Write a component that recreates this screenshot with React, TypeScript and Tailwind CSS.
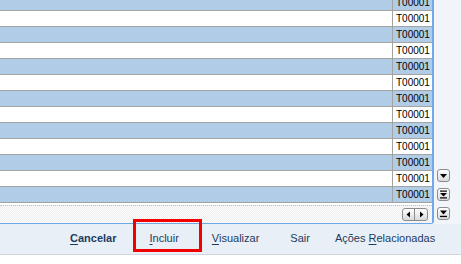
import React from "react";

const rows = Array.from({ length: 13 }, (_, i) => i);

const Btn = ({ children }: { children: React.ReactNode }) => (
  <div className="w-[13px] h-[13px] rounded-[3px] border border-[#8c8c8c] bg-linear-to-b from-white to-[#dadada] flex items-center justify-center">
    {children}
  </div>
);

const FooterLink = ({
  pre,
  u,
  post,
  className = "",
}: {
  pre?: string;
  u?: string;
  post?: string;
  className?: string;
}) => (
  <span className={`text-[11px] text-[#1c3b62] whitespace-nowrap ${className}`}>
    {pre}
    {u && <span className="underline underline-offset-[2px]">{u}</span>}
    {post}
  </span>
);

export default function App() {
  return (
    <div className="relative w-[461px] h-[264px] overflow-hidden bg-white font-['Liberation_Sans',Arial,sans-serif]">
      <div className="flex h-[224px]">
        {/* grid */}
        <div className="w-[434px] h-[224px] flex flex-col overflow-hidden bg-white border-r-2 border-b border-[#70a8ea] rounded-br-[3px]">
          <div className="-mt-[5px] flex flex-col">
            {rows.map((i) => (
              <div
                key={i}
                className={`flex h-[16px] shrink-0 border-b border-[#a3a3a3] ${
                  i % 2 === 0 ? "bg-[#b1cce7]" : "bg-white"
                }`}
              >
                <div className="flex-1" />
                <div className="w-[40px] border-l border-[#a3a3a3] pl-[3px] text-[10px] leading-[15px] text-black">
                  T00001
                </div>
              </div>
            ))}
          </div>
          <div className="h-[2px] shrink-0" />
          <div className="flex-1 flex items-center justify-end pr-[4px] border-t border-dotted border-[#c4c4c4] bg-[image:repeating-conic-gradient(#ececec_0_25%,#ffffff_0_50%)] bg-[length:2px_2px]">
            <div className="flex h-[13px] rounded-[3px] border border-[#8c8c8c] bg-linear-to-b from-white to-[#dadada]">
              <div className="w-[12px] flex items-center justify-center border-r border-[#8c8c8c]">
                <svg width="9" height="9" viewBox="0 0 9 9">
                  <polygon points="6,1.5 6,7.5 2.5,4.5" fill="#000" />
                </svg>
              </div>
              <div className="w-[12px] flex items-center justify-center">
                <svg width="9" height="9" viewBox="0 0 9 9">
                  <polygon points="3,1.5 3,7.5 6.5,4.5" fill="#000" />
                </svg>
              </div>
            </div>
          </div>
        </div>
        {/* side scroll buttons */}
        <div className="flex-1 bg-[#f1f4f9] flex flex-col items-start pl-[3px] pt-[169px] gap-[6px]">
          <Btn>
            <svg width="9" height="9" viewBox="0 0 9 9">
              <polygon points="1,3 8,3 4.5,7" fill="#000" />
            </svg>
          </Btn>
          <Btn>
            <svg width="9" height="9" viewBox="0 0 9 9">
              <rect x="1" y="0.5" width="7" height="1.2" fill="#000" />
              <polygon points="1,3 8,3 4.5,6.5" fill="#000" />
              <rect x="1" y="7.3" width="7" height="1.2" fill="#000" />
            </svg>
          </Btn>
          <Btn>
            <svg width="9" height="9" viewBox="0 0 9 9">
              <polygon points="1,1.5 8,1.5 4.5,5.5" fill="#000" />
              <rect x="1" y="6.8" width="7" height="1.3" fill="#000" />
            </svg>
          </Btn>
        </div>
      </div>

      {/* footer */}
      <div className="flex items-center h-[31px] bg-[#e9eff6] border-b border-[#cfd6de] pl-[70px] pb-[1px]">
        <FooterLink u="C" post="ancelar" className="font-bold" />
        <FooterLink u="I" post="ncluir" className="ml-[33px]" />
        <FooterLink u="V" post="isualizar" className="ml-[33px]" />
        <FooterLink pre="Sair" className="ml-[31px]" />
        <FooterLink pre="Ações " u="R" post="elacionadas" className="ml-[25px]" />
      </div>

      {/* highlight annotation */}
      <div className="absolute left-[133px] top-[219px] w-[69px] h-[33px] border-[3px] border-[#f20000]" />
    </div>
  );
}
